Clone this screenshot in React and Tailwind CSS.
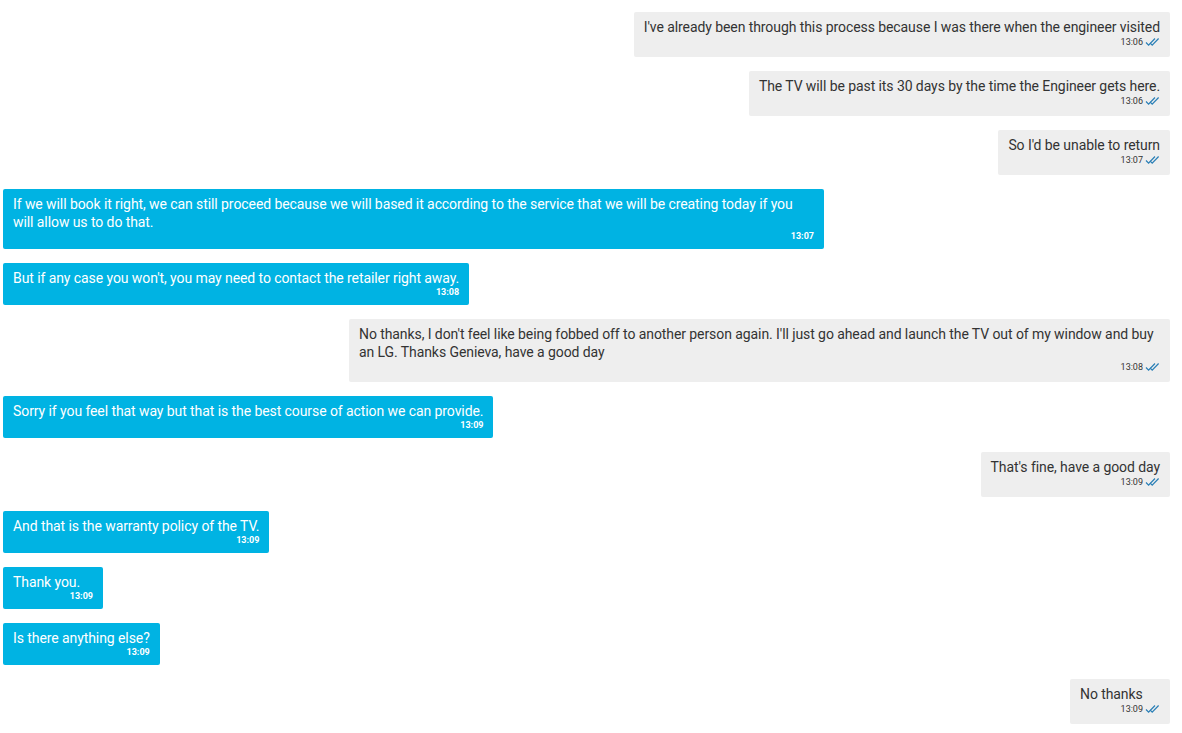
import { Fragment } from 'react';

const messages = [
  { from: 'me', text: "I've already been through this process because I was there when the engineer visited", time: '13:06' },
  { from: 'me', text: 'The TV will be past its 30 days by the time the Engineer gets here.', time: '13:06' },
  { from: 'me', text: "So I'd be unable to return", time: '13:07' },
  { from: 'agent', text: 'If we will book it right, we can still proceed because we will based it according to the service that we will be creating today if you will allow us to do that.', time: '13:07' },
  { from: 'agent', text: "But if any case you won't, you may need to contact the retailer right away.", time: '13:08' },
  { from: 'me', text: "No thanks, I don't feel like being fobbed off to another person again. I'll just go ahead and launch the TV out of my window and buy an LG. Thanks Genieva, have a good day", time: '13:08' },
  { from: 'agent', text: 'Sorry if you feel that way but that is the best course of action we can provide.', time: '13:09' },
  { from: 'me', text: "That's fine, have a good day", time: '13:09' },
  { from: 'agent', text: 'And that is the warranty policy of the TV.', time: '13:09' },
  { from: 'agent', text: 'Thank you.', time: '13:09' },
  { from: 'agent', text: 'Is there anything else?', time: '13:09' },
  { from: 'me', text: 'No thanks', time: '13:09' },
];

const DoubleCheck = () => (
  <svg width="15" height="10" viewBox="0 0 15 10" fill="none" stroke="#2a7fb6" strokeWidth="1.2" className="ml-[2px]">
    <path d="M1 5.5 L3.6 8.2 L10 1.5" />
    <path d="M5 5.8 L7.2 8.2 L13.6 1.5" />
  </svg>
);

const Bubble = ({ msg }) => {
  const mine = msg.from === 'me';
  return (
    <div className={`flex ${mine ? 'justify-end pr-3' : 'justify-start pl-[3px]'}`}>
      <div
        className={`min-w-[100px] max-w-[821px] rounded-[2px] px-[10px] pt-[6px] ${
          mine ? 'bg-[#eeeeee] text-[#333333] pb-[9px]' : 'bg-[#00b3e3] text-white pb-[8px]'
        }`}
      >
        <p className="text-[14px] leading-[18px] tracking-[-0.08px]">{msg.text}</p>
        <div className="flex items-center justify-end">
          <span className={`text-[9px] ${mine ? 'leading-[12px] text-[#333333]' : 'leading-[10px] font-bold text-white'}`}>
            {msg.time}
          </span>
          {mine && <DoubleCheck />}
        </div>
      </div>
    </div>
  );
};

export default function App() {
  return (
    <div
      className="w-[1182px] h-[733px] bg-white overflow-hidden pt-3 flex flex-col gap-[14px]"
      style={{ fontFamily: 'Roboto, sans-serif' }}
    >
      {messages.map((m, i) => (
        <Fragment key={i}>
          <Bubble msg={m} />
        </Fragment>
      ))}
    </div>
  );
}
